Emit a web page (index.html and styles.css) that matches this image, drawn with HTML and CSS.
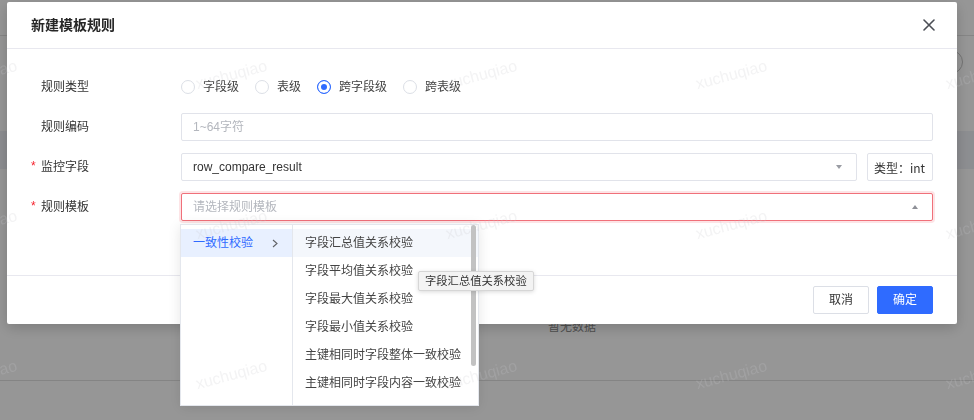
FILE: index.html
```html
<!DOCTYPE html>
<html lang="zh-CN">
<head>
<meta charset="utf-8">
<title>新建模板规则</title>
<link rel="stylesheet" href="styles.css">
</head>
<body>
<div class="page">
  <div class="page-top"></div>
  <div class="page-tools"><span class="round-btn"></span></div>
  <div class="table-head"></div>
  <div class="table-body"><span class="empty">暂无数据</span></div>
</div>
<div class="mask"></div>
<div class="modal-layer">
  <div class="modal">
    <div class="modal-header">
      <span class="modal-title">新建模板规则</span>
      <span class="close">
        <svg width="12" height="12" viewBox="0 0 12 12"><path d="M1 1 L11 11 M11 1 L1 11" stroke="#4b4e55" stroke-width="1.6" fill="none" stroke-linecap="round"/></svg>
      </span>
    </div>
    <div class="modal-body">
      <div class="form-row">
        <div class="form-label"><span class="req"></span>规则类型</div>
        <div class="radios">
          <span class="radio"><span class="radio-dot"></span><span class="radio-text">字段级</span></span>
          <span class="radio"><span class="radio-dot"></span><span class="radio-text">表级</span></span>
          <span class="radio"><span class="radio-dot checked"></span><span class="radio-text">跨字段级</span></span>
          <span class="radio"><span class="radio-dot"></span><span class="radio-text">跨表级</span></span>
        </div>
      </div>
      <div class="form-row">
        <div class="form-label"><span class="req"></span>规则编码</div>
        <div class="input"><span class="placeholder">1~64字符</span></div>
      </div>
      <div class="form-row">
        <div class="form-label"><span class="req">*</span>监控字段</div>
        <div class="field-line">
          <div class="input select"><span class="value">row_compare_result</span><span class="caret down"></span></div>
          <div class="type-tag">类型：int</div>
        </div>
      </div>
      <div class="form-row">
        <div class="form-label"><span class="req">*</span>规则模板</div>
        <div class="input select error">
          <span class="placeholder">请选择规则模板</span><span class="caret up"></span>
          <div class="cascader">
            <div class="cas-col cas-left">
              <div class="cas-item active">一致性校验
                <svg class="chev" width="6" height="9" viewBox="0 0 6 9"><path d="M1 1 L5 4.5 L1 8" stroke="#606266" stroke-width="1.1" fill="none"/></svg>
              </div>
            </div>
            <div class="cas-col cas-right">
              <div class="cas-item hover">字段汇总值关系校验</div>
              <div class="cas-item">字段平均值关系校验</div>
              <div class="cas-item">字段最大值关系校验</div>
              <div class="cas-item">字段最小值关系校验</div>
              <div class="cas-item">主键相同时字段整体一致校验</div>
              <div class="cas-item">主键相同时字段内容一致校验</div>
              <div class="cas-item">主键相同时记录数一致校验</div>
            </div>
            <span class="scrollbar"></span>
            <span class="tooltip">字段汇总值关系校验</span>
          </div>
        </div>
      </div>
    </div>
    <div class="modal-footer">
      <button class="btn">取消</button>
      <button class="btn btn-primary">确定</button>
    </div>
  </div>
</div>
<div class="watermark">
  <span>xuchuqiao</span><span>xuchuqiao</span><span>xuchuqiao</span><span>xuchuqiao</span><span>xuchuqiao</span>
  <span>xuchuqiao</span><span>xuchuqiao</span><span>xuchuqiao</span><span>xuchuqiao</span><span>xuchuqiao</span>
  <span>xuchuqiao</span><span>xuchuqiao</span><span>xuchuqiao</span><span>xuchuqiao</span><span>xuchuqiao</span>
</div>
</body>
</html>
```
FILE: styles.css
```css
* { box-sizing: border-box; }

body {
  margin: 0;
  width: 974px;
  height: 420px;
  overflow: hidden;
  background: #fff;
  font-family: "Liberation Sans", "Noto Sans CJK SC", sans-serif;
  font-size: 12px;
  color: #333;
}

/* background page */
.page-top {
  height: 36px;
  border-bottom: 1px solid #e3e3e3;
}
.page-tools {
  height: 95px;
  display: flex;
  justify-content: flex-end;
  padding: 14px 11px 0 0;
}
.round-btn {
  width: 24px;
  height: 24px;
  border: 1px solid #c4c4c4;
  border-radius: 50%;
}
.table-head {
  height: 38px;
  background: #eff1f6;
}
.table-body {
  height: 212px;
  border-bottom: 1px solid #e1e1e1;
  padding: 150px 0 0 548px;
}
.empty {
  display: block;
  line-height: 16px;
  color: #8a8a8a;
  font-size: 12px;
}

.mask {
  position: fixed;
  inset: 0;
  background: rgba(0, 0, 0, 0.41);
}

.modal-layer {
  position: fixed;
  inset: 0;
  padding: 2px 0 0 7px;
}

.modal {
  width: 950px;
  background: #fff;
  border-radius: 2px;
  box-shadow: 0 4px 14px rgba(0, 0, 0, 0.18);
}

.modal-header {
  height: 47px;
  border-bottom: 1px solid #e8e8ef;
  display: flex;
  align-items: center;
  justify-content: space-between;
  padding: 0 22px 0 24px;
}
.modal-title {
  font-size: 14px;
  font-weight: 700;
  color: #262626;
  line-height: 20px;
}
.close {
  display: flex;
  width: 12px;
  height: 12px;
}

.modal-body {
  padding: 24px 24px 54px 0;
  border-bottom: 1px solid #e8e8ef;
}

.form-row {
  display: grid;
  grid-template-columns: 174px 1fr;
  align-items: center;
  height: 28px;
  margin-bottom: 12px;
}
.form-row:last-child { margin-bottom: 0; }

.form-label {
  display: flex;
  align-items: center;
  padding-left: 24px;
  line-height: 16px;
  color: #333;
}
.req {
  width: 10px;
  color: #f5222d;
  font-size: 12px;
  line-height: 12px;
  align-self: flex-start;
  padding-top: 1px;
}

.radios {
  display: flex;
  align-items: center;
}
.radio {
  display: flex;
  align-items: center;
  margin-right: 16px;
}
.radio-dot {
  width: 14px;
  height: 14px;
  border: 1px solid #dcdfe6;
  border-radius: 50%;
  background: #fff;
}
.radio-dot.checked {
  border-color: #2f6bff;
  background: #2f6bff;
  box-shadow: inset 0 0 0 3px #fff;
}
.radio-text {
  margin-left: 8px;
  line-height: 16px;
  color: #444;
}

.input {
  height: 28px;
  border: 1px solid #e1e3ea;
  border-radius: 2px;
  padding: 0 11px;
  display: flex;
  align-items: center;
  line-height: 16px;
  background: #fff;
}
.placeholder { color: #b4b7be; }
.value { color: #333; }

.field-line {
  display: flex;
  gap: 10px;
}
.select { flex: 1; position: relative; padding-right: 14px; }
.caret {
  margin-left: auto;
  width: 0;
  height: 0;
  border-left: 3px solid transparent;
  border-right: 3px solid transparent;
}
.caret.down { border-top: 4px solid #9a9ca3; }
.caret.up { border-bottom: 4px solid #8e9097; }

.type-tag {
  height: 28px;
  width: 66px;
  border: 1px solid #e1e3ea;
  border-radius: 2px;
  padding: 0 6px;
  display: flex;
  align-items: center;
  color: #333;
  white-space: nowrap;
  font-family: "Noto Sans CJK SC", sans-serif;
}

.select.error {
  border-color: #f0707a;
  box-shadow: 0 0 0 2px rgba(245, 108, 118, 0.18);
}

/* cascader dropdown */
.cascader {
  position: absolute;
  top: 30px;
  left: -2px;
  width: 299px;
  height: 182px;
  background: #fff;
  border: 1px solid #e4e7ed;
  box-shadow: 0 2px 12px rgba(0, 0, 0, 0.1);
  display: flex;
  z-index: 5;
}
.cas-col {
  padding-top: 4px;
  overflow: hidden;
}
.cas-left {
  width: 112px;
  border-right: 1px solid #e4e7ed;
}
.cas-right { flex: 1; }
.cas-item {
  height: 28px;
  display: flex;
  align-items: center;
  padding-left: 12px;
  line-height: 16px;
  color: #444;
  white-space: nowrap;
}
.cas-left .cas-item.active {
  background: #e8f0ff;
  color: #2f6bff;
  padding-right: 14px;
  justify-content: space-between;
}
.cas-right .cas-item.hover { background: #f4f7fc; }
.cas-right .cas-item:last-child { padding-top: 18px; }
.chev { display: block; }

.scrollbar {
  position: absolute;
  top: 0;
  right: 2px;
  width: 5px;
  height: 141px;
  border-radius: 3px;
  background: #c2c2c2;
}

.tooltip {
  position: absolute;
  left: 237px;
  top: 46px;
  height: 20px;
  padding: 0 6px;
  display: flex;
  align-items: center;
  font-size: 11.3px;
  color: #333;
  background: #f3f3f3;
  border: 1px solid #d6d6d6;
  border-radius: 2px;
  box-shadow: 0 1px 4px rgba(0, 0, 0, 0.15);
  white-space: nowrap;
  z-index: 6;
}

.modal-footer {
  height: 48px;
  display: flex;
  justify-content: flex-end;
  align-items: center;
  gap: 8px;
  padding: 0 24px;
}
.btn {
  height: 28px;
  width: 56px;
  padding: 0;
  border: 1px solid #dcdfe6;
  border-radius: 2px;
  background: #fff;
  color: #333;
  font-family: "Liberation Sans", "Noto Sans CJK SC", sans-serif;
  font-size: 12px;
  line-height: 16px;
}
.btn-primary {
  background: #2f6bff;
  border-color: #2f6bff;
  color: #fff;
}

/* watermark layer */
.watermark {
  position: fixed;
  top: 0;
  left: -55px;
  display: grid;
  grid-template-columns: repeat(5, 250px);
  grid-auto-rows: 150px;
  align-items: center;
  pointer-events: none;
  z-index: 20;
}
.watermark span {
  justify-self: start;
  font-family: "Liberation Sans", sans-serif;
  font-size: 16px;
  line-height: 20px;
  color: rgba(200, 200, 205, 0.22);
  transform: rotate(-15deg);
  transform-origin: center center;
}
```
